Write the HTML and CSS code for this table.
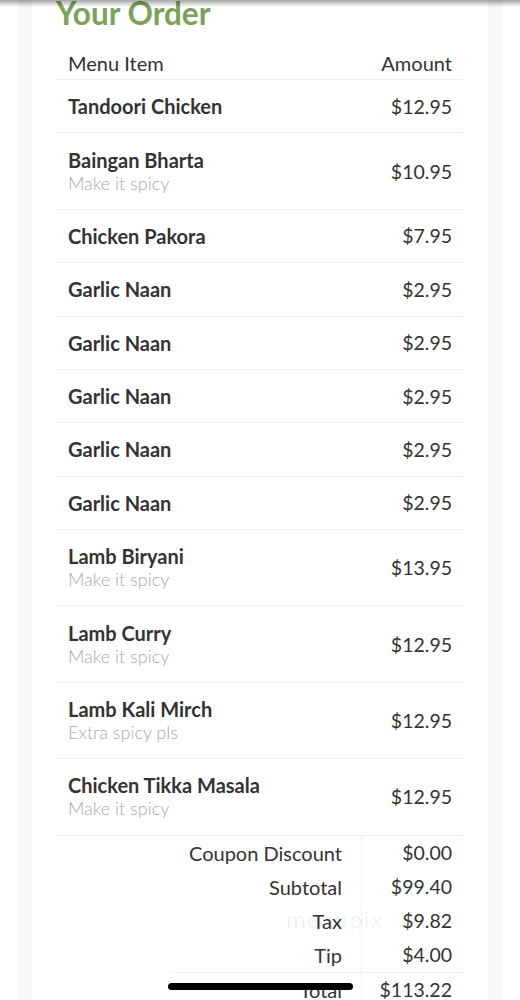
FILE: index.html
```html
<!DOCTYPE html>
<html lang="en">
<head>
  <meta charset="UTF-8" />
  <meta name="viewport" content="width=device-width, initial-scale=1.0"/>
  <title>Your Order</title>
  <link rel="stylesheet" href="styles.css">
</head>
<body>

<div class="top-shade"></div>

<div class="page">
  <div class="card">
    <h1>Your Order</h1>

    <div class="order">
      <div class="row head">
        <span>Menu Item</span>
        <span>Amount</span>
      </div>

      <div class="row">
        <div class="item"><div class="name">Tandoori Chicken</div></div>
        <div class="price">$12.95</div>
      </div>
      <div class="row">
        <div class="item"><div class="name">Baingan Bharta</div><div class="note">Make it spicy</div></div>
        <div class="price">$10.95</div>
      </div>
      <div class="row">
        <div class="item"><div class="name">Chicken Pakora</div></div>
        <div class="price">$7.95</div>
      </div>
      <div class="row">
        <div class="item"><div class="name">Garlic Naan</div></div>
        <div class="price">$2.95</div>
      </div>
      <div class="row">
        <div class="item"><div class="name">Garlic Naan</div></div>
        <div class="price">$2.95</div>
      </div>
      <div class="row">
        <div class="item"><div class="name">Garlic Naan</div></div>
        <div class="price">$2.95</div>
      </div>
      <div class="row">
        <div class="item"><div class="name">Garlic Naan</div></div>
        <div class="price">$2.95</div>
      </div>
      <div class="row">
        <div class="item"><div class="name">Garlic Naan</div></div>
        <div class="price">$2.95</div>
      </div>
      <div class="row">
        <div class="item"><div class="name">Lamb Biryani</div><div class="note">Make it spicy</div></div>
        <div class="price">$13.95</div>
      </div>
      <div class="row">
        <div class="item"><div class="name">Lamb Curry</div><div class="note">Make it spicy</div></div>
        <div class="price">$12.95</div>
      </div>
      <div class="row">
        <div class="item"><div class="name">Lamb Kali Mirch</div><div class="note">Extra spicy pls</div></div>
        <div class="price">$12.95</div>
      </div>
      <div class="row">
        <div class="item"><div class="name">Chicken Tikka Masala</div><div class="note">Make it spicy</div></div>
        <div class="price">$12.95</div>
      </div>
    </div>

    <div class="totals">
      <div class="label">Coupon Discount</div><div class="value">$0.00</div>
      <div class="label">Subtotal</div><div class="value">$99.40</div>
      <div class="label">Tax</div><div class="value">$9.82</div>
      <div class="label">Tip</div><div class="value">$4.00</div>
      <div class="label grand">Total</div><div class="value grand">$113.22</div>
      <span class="watermark">menupix</span>
    </div>
  </div>
</div>

<div class="home-bar"></div>

</body>
</html>
```

FILE: styles.css
```css
* { box-sizing: border-box; }

body {
  margin: 0;
  background: #fff;
  font-family: 'Lato', 'Liberation Sans', sans-serif;
  color: #333;
  overflow: hidden;
}

/* status bar shadow at the very top */
.top-shade {
  position: fixed;
  top: 0;
  left: 0;
  right: 0;
  height: 7px;
  background: linear-gradient(rgba(0,0,0,0.35), rgba(0,0,0,0));
  z-index: 5;
}

.page {
  margin: 0 17px 0 18px;
  padding: 0 15px 0 14px;
  background: #f7f7f7;
  min-height: 1000px;
}

.card {
  background: #fff;
  padding: 0 25px 0 24px;
  min-height: 1000px;
}

.card h1 {
  margin: 0;
  margin-top: -4px;
  font-size: 31.5px;
  line-height: 35px;
  font-weight: 700;
  color: #7aa35a;
}

.row {
  display: flex;
  justify-content: space-between;
  align-items: center;
  padding: 14.2px 11px 14.2px 12px;
  border-bottom: 1px solid #f1f1f1;
}

.row.head {
  padding-top: 19px;
  padding-bottom: 3px;
  font-size: 20px;
  line-height: 26px;
  font-weight: 400;
  color: #333;
}

.name {
  font-size: 20px;
  font-weight: 700;
  line-height: 24px;
  color: #333;
}

.note {
  font-size: 18px;
  line-height: 23px;
  color: #a9a9a9;
  font-weight: 300;
}

.price {
  font-size: 19.5px;
  color: #333;
}

.totals {
  position: relative;
  margin-left: auto;
  width: 293px;
  display: grid;
  grid-template-columns: 192px 101px;
  font-size: 20px;
  line-height: 34px;
}

.totals .label {
  text-align: right;
  padding-right: 19px;
  border-right: 1px solid #f1f1f1;
}

.totals .value {
  text-align: right;
  padding-right: 11px;
  font-size: 19.5px;
}

.totals .grand {
  border-top: 1px solid #f1f1f1;
}

.watermark {
  position: absolute;
  left: 116px;
  top: 66px;
  font-size: 24px;
  letter-spacing: 1px;
  color: rgba(0,0,0,0.06);
}

/* iOS home indicator */
.home-bar {
  position: fixed;
  left: 168px;
  top: 983px;
  width: 185px;
  height: 7px;
  border-radius: 4px;
  background: #000;
  z-index: 5;
}
```
